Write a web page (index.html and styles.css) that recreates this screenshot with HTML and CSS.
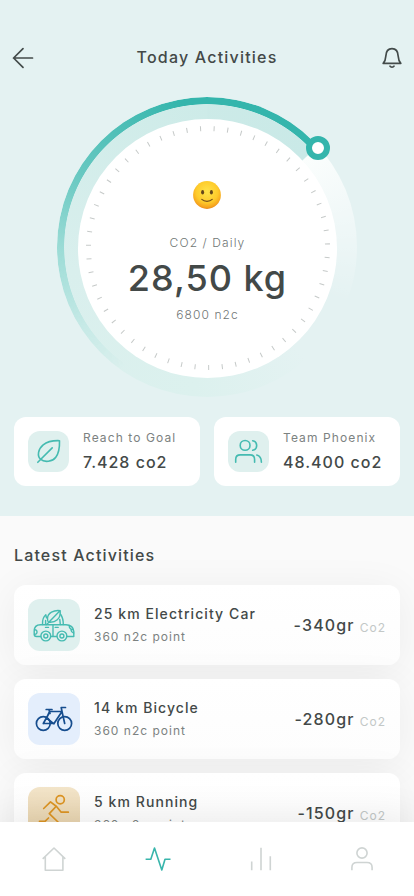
FILE: index.html
```html
<!DOCTYPE html>
<html lang="en">
<head>
<meta charset="utf-8">
<meta name="viewport" content="width=device-width, initial-scale=1">
<title>Today Activities</title>
<link rel="stylesheet" href="styles.css">
</head>
<body>
<div class="app">
  <section class="hero">
    <header class="topbar">
      <svg class="back" width="22" height="22" viewBox="0 0 22 22"><path d="M20.500 11H1.500M11 1.600L1.600 11L11 20.400"/></svg>
      <h1 class="title">Today Activities</h1>
      <svg class="bell" width="20" height="22" viewBox="0 0 20 22"><path d="M1.200 16.300H18.800C17 14.400 16.400 12.500 16.200 9.200C16 4.600 14.200 1.700 10 1.700S4 4.600 3.800 9.200C3.600 12.500 3 14.400 1.200 16.300ZM8 19.200C8.700 20.500 11.300 20.500 12 19.200"/></svg>
    </header>

    <div class="dial">
      <div class="arc"></div>
      <div class="face">
        <svg class="ticks" viewBox="0 0 260 260"><circle cx="130" cy="130" r="119.500" pathLength="55"/></svg>
        <svg class="emoji" width="28" height="28" viewBox="0 0 28 28">
          <defs>
            <radialGradient id="skin" cx=".5" cy=".38" r=".63"><stop offset="0" stop-color="#ffe34a"/><stop offset=".62" stop-color="#fecb2b"/><stop offset=".88" stop-color="#f6a51e"/><stop offset="1" stop-color="#e98518"/></radialGradient>
          </defs>
          <circle cx="14" cy="14" r="13.900" fill="url(#skin)"/>
          <ellipse cx="9.600" cy="11.300" rx="1.500" ry="2.200" fill="#65471b"/>
          <ellipse cx="18.400" cy="11.300" rx="1.500" ry="2.200" fill="#65471b"/>
          <path d="M8.800 18.400C11.500 21 16.500 21 19.200 18.400" fill="none" stroke="#77501a" stroke-width="1.200" stroke-linecap="round"/>
        </svg>
        <div class="dial-label">CO2 / Daily</div>
        <div class="dial-value">28,50 kg</div>
        <div class="dial-note">6800 n2c</div>
      </div>
      <div class="knob"></div>
    </div>

    <div class="stats">
      <div class="stat">
        <div class="stat-icon"><svg width="41" height="41" viewBox="28 431 41 41"><path d="M59.500 440.700C53.500 440.500 47.500 441.300 43.200 444.800C38 449 37 456 40.500 459.200C44.500 462.800 52.500 461.700 55.800 457.200C59 452.800 59.700 446.500 59.500 440.700ZM37.800 462.300L52.200 447.900"/></svg></div>
        <div class="stat-text"><div class="stat-label">Reach to Goal</div><div class="stat-value">7.428 co2</div></div>
      </div>
      <div class="stat">
        <div class="stat-icon"><svg width="41" height="41" viewBox="228 431 41 41"><circle cx="245.100" cy="445.400" r="4.900"/><path d="M252.700 440.700C258 441.700 258 449.300 252.700 450.300M235.700 462.300V459.400C235.700 456.500 237.500 454.900 240.300 454.900H250C252.800 454.900 254.600 456.500 254.600 459.400V462.300M256.800 455C260 455.800 261.400 458 261.400 462.300"/></svg></div>
        <div class="stat-text"><div class="stat-label">Team Phoenix</div><div class="stat-value">48.400 co2</div></div>
      </div>
    </div>
  </section>

  <main class="latest">
    <h2 class="heading">Latest Activities</h2>
    <div class="list">
      <article class="item">
        <div class="item-icon car"><svg width="52" height="52" viewBox="28 599 52 52">
          <path d="M40.600 636.500H36.500C34.800 636.500 34.200 635.500 34.200 634V631C34.200 627 36.500 624.700 40.500 624.700H66C70.500 624.700 73.800 627.500 73.800 631.500V636.500H67M56.500 636.500H51"/>
          <path d="M34.500 629.800Q37 629.600 37 632Q37 634.400 34.500 634.300M69.200 625.800Q69.300 629.600 73.200 629.600M73.600 633Q71.300 632.500 71 630M53 624.900V636M45.500 627.400H48.500M55.200 627.400H58.200"/>
          <path d="M42.500 624.500C42.200 619.500 43 617 45.800 614.700L46.500 617.800M45.600 624.500V620.500M63.300 624.500C63.300 620.500 62.800 617.500 60.700 614.500M60.300 624.500L59.800 619.500"/>
          <path d="M60.200 610.600C54 609.800 47.500 612.600 47.500 618.500C47.500 620.500 48 621.800 48.500 622.200C55.500 623 61 619 60.200 610.600M46.600 624.500L59 611.800"/>
          <circle cx="45.800" cy="636" r="4.900"/><circle cx="45.800" cy="636" r="2"/><circle cx="61.900" cy="636" r="4.900"/><circle cx="61.900" cy="636" r="2"/>
        </svg></div>
        <div class="item-text"><div class="item-title">25 km Electricity Car</div><div class="item-sub">360 n2c point</div></div>
        <div class="amount"><span class="gr">-340gr</span><span class="unit">Co2</span></div>
      </article>
      <article class="item">
        <div class="item-icon bike"><svg width="52" height="52" viewBox="28 693 52 52">
          <circle cx="43.300" cy="723.500" r="6.900"/><circle cx="64.700" cy="723.500" r="6.900"/>
          <path d="M46.200 709.500H52M49 709.700L50 713.500M43.300 723.500L50 711.500H62M49.500 711.500L46.500 718L54 723.800M43.300 723.500H54L62 711.500M65.500 707.500H61.200L62 711.500L64.700 723.500"/>
        </svg></div>
        <div class="item-text"><div class="item-title">14 km Bicycle</div><div class="item-sub">360 n2c point</div></div>
        <div class="amount"><span class="gr">-280gr</span><span class="unit">Co2</span></div>
      </article>
      <article class="item">
        <div class="item-icon run"><svg width="52" height="52" viewBox="28 787 52 52">
          <circle cx="60.200" cy="799.700" r="4.100"/><path d="M43.700 808.500L50.500 801.800L56.500 806.500L61.200 812.200H68.300M56 806.500L49.300 813.700L58 822L56 831M48.500 818L45 821.300H39.500"/>
        </svg></div>
        <div class="item-text"><div class="item-title">5 km Running</div><div class="item-sub">360 n2c point</div></div>
        <div class="amount"><span class="gr">-150gr</span><span class="unit">Co2</span></div>
      </article>
    </div>
  </main>

  <nav class="tabs">
    <svg width="28" height="28" viewBox="39.500 845 28 28"><path d="M42.200 858.800L53.500 848L64.800 858.800M44.800 857V870.200H62.400V857"/></svg>
    <svg class="active" width="28" height="28" viewBox="144 845 28 28"><path d="M145.600 859.200H150.800L154.500 848L161.800 870L165 859.200H170.500"/></svg>
    <svg width="28" height="28" viewBox="247 845 28 28"><path d="M251.700 861.500V870.200M261 847.800V870.200M270.300 856.300V870.200"/></svg>
    <svg width="28" height="28" viewBox="348 845 28 28"><circle cx="362" cy="853" r="5.100"/><path d="M351.900 870.200V867.500C351.900 864.200 353.700 862.500 357 862.500H367C370.300 862.500 372.100 864.200 372.100 867.500V870.200"/></svg>
  </nav>
</div>
</body>
</html>
```
FILE: styles.css
```css
* { box-sizing: border-box; }
body { margin: 0; font-family: Inter, "Liberation Sans", sans-serif; color: #434948; }
svg { display: block; fill: none; stroke-linecap: round; stroke-linejoin: round; }
.app { width: 414px; height: 896px; overflow: hidden; display: flex; flex-direction: column; background: #fafafa; }

.hero { flex: none; height: 516px; background: #e4f2f2; display: flex; flex-direction: column; align-items: center; }
.topbar { width: 100%; height: 97px; padding: 46px 12px 0; display: flex; justify-content: space-between; align-items: flex-start; }
.topbar svg { margin-top: 1px; stroke: #434b4a; stroke-width: 1.7; }
.back { margin-right: -2px; }
.title { margin: 0; font-size: 16px; line-height: 22px; font-weight: 500; letter-spacing: 1.2px; }

.dial { position: relative; width: 300px; height: 300px; border-radius: 50%; padding: 21.5px 0 0 21px;
  background: conic-gradient(rgba(203,234,231,.97) 0deg, #c9e9e7 47.5deg, #fbfefd 48deg, rgba(255,255,255,.5) 75deg, rgba(228,242,242,0) 112deg, rgba(220,242,239,0) 138deg, #dcf1ee 185deg, #d9efed 260deg, #cdebe8 360deg); }
.arc { position: absolute; inset: 0; border-radius: 50%;
  background: conic-gradient(#34b5ac 0deg 48deg, transparent 48.5deg 215deg, rgba(160,222,217,.35) 238deg, #9adbd5 270deg, #67c8c1 300deg, #34b5ac 350deg);
  -webkit-mask: radial-gradient(circle, transparent 142.5px, #000 143.2px);
  mask: radial-gradient(circle, transparent 142.5px, #000 143.2px); }
.face { position: relative; width: 259px; height: 259px; border-radius: 50%; background: #fff; display: flex; flex-direction: column; align-items: center; padding-top: 62px; }
.ticks { position: absolute; inset: -.5px; width: 260px; height: 260px; stroke: #c6cac9; stroke-width: 5; stroke-linecap: butt; stroke-dasharray: .075 .925; stroke-dashoffset: -.46; transform: rotate(-90.3deg); }
.emoji { margin-right: 1px; }
.dial-label { margin-top: 25px; font-size: 12px; line-height: 17px; color: #707675; font-weight: 300; letter-spacing: 1.1px; }
.dial-value { margin-top: 4.5px; font-size: 36px; line-height: 46px; font-weight: 500; letter-spacing: 1px; }
.dial-note { margin-top: 5.5px; font-size: 12px; line-height: 16px; color: #707675; font-weight: 300; letter-spacing: 1.1px; }
.knob { position: absolute; left: 249px; top: 39px; width: 24px; height: 24px; border-radius: 50%; border: 6px solid #34b5ac; background: #fff; }

.stats { display: grid; grid-template-columns: 186px 186px; gap: 14px; margin-top: 20px; }
.stat { height: 69px; border-radius: 12px; background: #fff; padding: 14px; display: flex; gap: 14px; }
.stat-icon { flex: none; width: 41px; height: 41px; border-radius: 12px; background: #dff0ee; }
.stat-icon svg { stroke: #45bbb1; stroke-width: 1.6; }
.stat-text { margin-top: -2px; white-space: nowrap; }
.stat-label { font-size: 12px; line-height: 18px; color: #7c8281; letter-spacing: 1.1px; }
.stat-value { margin-top: 4px; font-size: 16px; line-height: 22px; font-weight: 500; letter-spacing: 1px; }

.latest { flex: none; height: 306px; padding: 28px 14px 0; }
.heading { margin: 0; font-size: 16px; line-height: 22px; font-weight: 500; letter-spacing: 1.15px; }
.list { margin-top: 19px; display: flex; flex-direction: column; gap: 14px; }
.item { flex: none; height: 80px; border-radius: 12px; background: linear-gradient(#fff, #fdfdfd); box-shadow: 0 5px 40px rgba(0,0,0,.06); padding: 14px; display: flex; position: relative; }
.item-icon { flex: none; width: 52px; height: 52px; border-radius: 12px; }
.item-icon svg { stroke-width: 1.4; }
.car { background: #dff0ee; stroke: #45bbb1; }
.bike { background: #e4eefc; stroke: #164d8e; }
.bike svg { stroke-width: 1.7; }
.run { background: linear-gradient(#f3e5ca, #e9d5b0 70%); stroke: #dc9423; }
.run svg { stroke-width: 1.7; }
.item-text { margin: 5px 0 0 14px; white-space: nowrap; }
.item-title { font-size: 14px; line-height: 20px; font-weight: 500; letter-spacing: 1.08px; }
.item-sub { margin-top: 4px; font-size: 12px; line-height: 18px; color: #7c8281; letter-spacing: 1px; }
.amount { margin-left: auto; height: 52px; display: flex; align-items: center; }
.gr { font-size: 16px; font-weight: 500; letter-spacing: 1.15px; }
.unit { margin: 4px 0 0 5px; font-size: 12px; color: #c3c8c7; letter-spacing: 1px; }

.tabs { flex: none; position: relative; height: 74px; background: #fff; box-shadow: 0 -3px 40px rgba(0,0,0,.09); padding: 23px 38px 0 39.5px; display: grid; grid-template-columns: 104.5px 103px 101px 28px; }
.tabs svg { stroke: #cfd4d3; stroke-width: 1.6; stroke-linecap: butt; }
.tabs .active { stroke: #38b5ab; }
```
